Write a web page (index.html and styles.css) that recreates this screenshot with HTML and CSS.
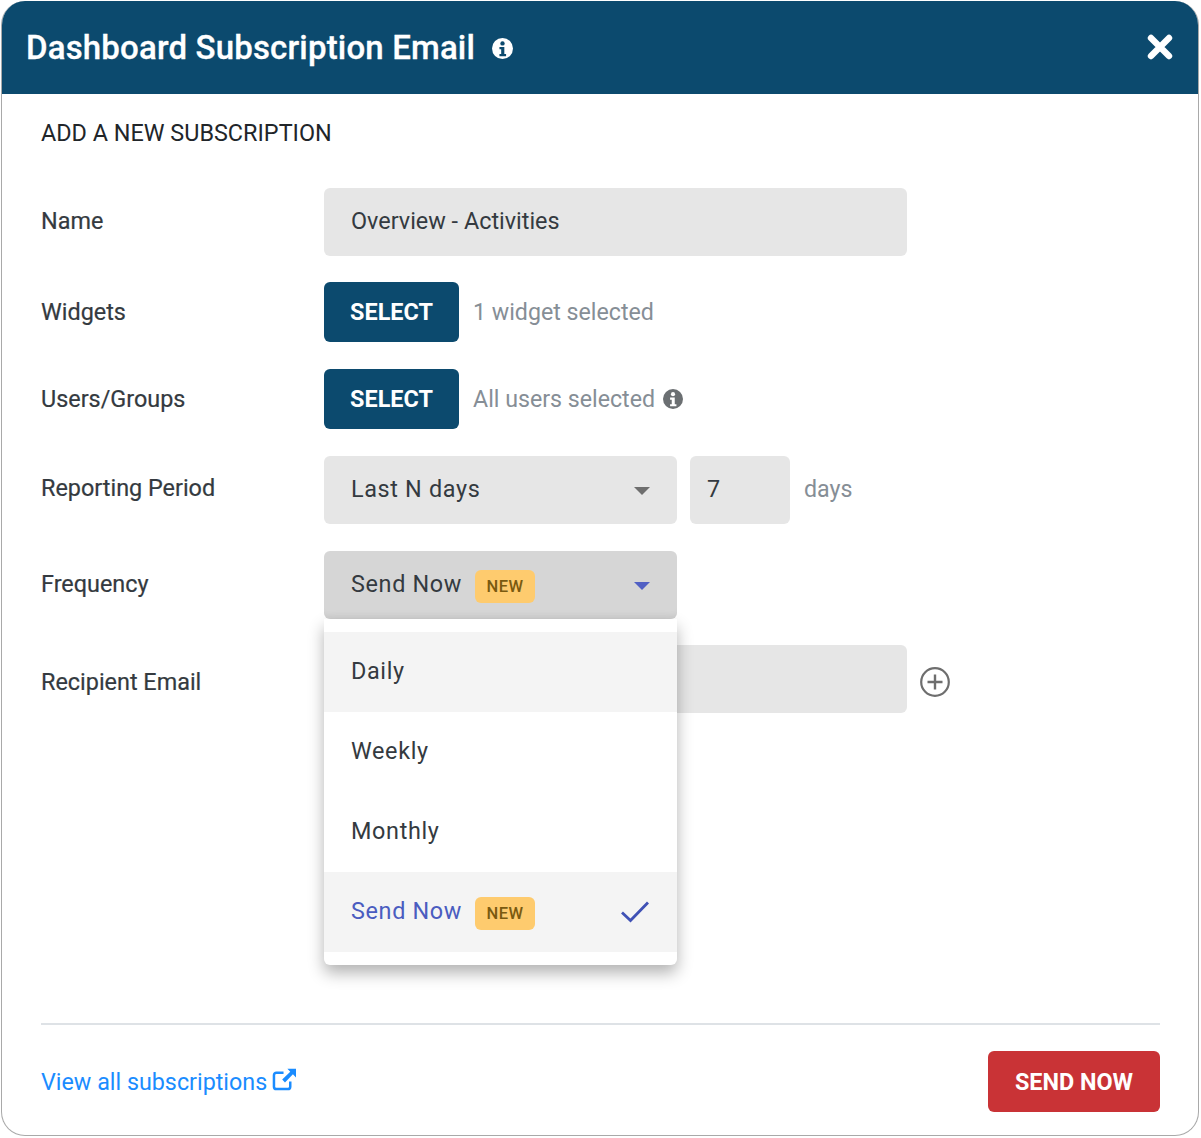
FILE: index.html
```html
<!DOCTYPE html>
<html lang="en">
<head>
<meta charset="utf-8">
<title>Dashboard Subscription Email</title>
<link rel="stylesheet" href="styles.css">
</head>
<body>
<main class="modal">
  <header class="modal-head">
    <h1 class="modal-title">Dashboard Subscription Email</h1>
    <svg class="title-info" viewBox="0 0 24 24" aria-hidden="true"><circle cx="12" cy="12" r="12" fill="#fff"/><circle cx="12" cy="6.2" r="2.5" fill="#0c4a6e"/><path d="M8.5 10.2h5.6v8h2v2.6H8.5v-2.6h2v-5.4h-2z" fill="#0c4a6e"/></svg>
    <svg class="close" viewBox="0 0 26 26" aria-hidden="true"><path d="M4 4l18 18M22 4L4 22" stroke="#fff" stroke-width="6.4" stroke-linecap="round"/></svg>
  </header>
  <section class="modal-body">
    <h2 class="section-title">ADD A NEW SUBSCRIPTION</h2>
    <div class="form">
      <div class="row">
        <span class="label label-up1">Name</span>
        <div class="field field-wide">Overview - Activities</div>
      </div>
      <div class="row row-btn">
        <span class="label">Widgets</span>
        <button class="btn btn-navy">SELECT</button>
        <span class="hint">1 widget selected</span>
      </div>
      <div class="row row-btn">
        <span class="label">Users/Groups</span>
        <button class="btn btn-navy">SELECT</button>
        <span class="hint">All users selected</span>
        <svg class="hint-info" viewBox="0 0 24 24" aria-hidden="true"><circle cx="12" cy="12" r="12" fill="#6b6f72"/><circle cx="12" cy="6.2" r="2.5" fill="#fff"/><path d="M8.5 10.2h5.6v8h2v2.6H8.5v-2.6h2v-5.4h-2z" fill="#fff"/></svg>
      </div>
      <div class="row">
        <span class="label label-up2">Reporting Period</span>
        <div class="field select"><span class="select-text">Last N days</span><i class="caret"></i></div>
        <div class="field number">7</div>
        <span class="hint">days</span>
      </div>
      <div class="row">
        <span class="label label-up1">Frequency</span>
        <div class="field select select-open"><span class="select-text">Send Now</span><span class="badge">NEW</span><i class="caret caret-blue"></i></div>
      </div>
      <div class="row">
        <span class="label label-down3">Recipient Email</span>
        <div class="field field-wide"></div>
        <svg class="add" viewBox="0 0 32 32" aria-hidden="true"><circle cx="16" cy="16" r="13.8" fill="none" stroke="#6e6e6e" stroke-width="2.2"/><path d="M16 8.5v15M8.5 16h15" stroke="#6e6e6e" stroke-width="2.4"/></svg>
      </div>
      <ul class="menu">
        <li class="menu-item menu-hover">Daily</li>
        <li class="menu-item">Weekly</li>
        <li class="menu-item">Monthly</li>
        <li class="menu-item menu-active">Send Now<span class="badge">NEW</span><svg class="check" viewBox="0 0 30 24" aria-hidden="true"><path d="M2 12.5l8.5 8L28 2.5" fill="none" stroke="#3f51b5" stroke-width="2.8"/></svg></li>
      </ul>
    </div>
    <footer class="modal-foot">
      <a class="link" href="#">View all subscriptions<svg class="ext" viewBox="0 0 26 24" aria-hidden="true"><path d="M19 14v5.500a2.500 2.500 0 0 1-2.500 2.500h-12A2.500 2.500 0 0 1 2 19.500v-12A2.500 2.500 0 0 1 4.500 5H12" fill="none" stroke="#1a8cff" stroke-width="2.600"/><path d="M16 0.800h9v9l-3.200-3.200-8.300 8.400-2.900-2.900 8.400-8.300z" fill="#1a8cff"/></svg></a>
      <button class="btn btn-red">SEND NOW</button>
    </footer>
  </section>
</main>
</body>
</html>
```

FILE: styles.css
```css
* { box-sizing: border-box; }
html, body { margin: 0; padding: 0; background: #fff; }
body { padding: 1px 2px 1px 1px; font-family: Roboto, "Liberation Sans", sans-serif; color: #212529; }
.modal {
  height: 1135px;
  border: 1px solid #a9a9a9;
  border-top: 0;
  border-radius: 24px;
  overflow: hidden;
  display: flex;
  flex-direction: column;
  background: #fff;
}
.modal-head {
  height: 93px;
  flex: none;
  background: #0c4a6e;
  display: flex;
  align-items: center;
  padding: 0 25px 0 24px;
  color: #fff;
}
.modal-title { margin: 0; font-size: 33px; font-weight: 500; letter-spacing: 0.170px; -webkit-text-stroke: 0.300px #fff; }
.title-info { width: 21px; height: 21px; margin-left: 17px; margin-top: 2px; }
.close { width: 26px; height: 26px; margin-left: auto; margin-bottom: 1px; }
.modal-body { flex: 1; display: flex; flex-direction: column; padding: 0 38px 0 39px; }
.section-title { margin: 0; height: 93.500px; padding-top: 24px; font-size: 23.400px; line-height: 30px; font-weight: 400; color: #212529; }
.form { position: relative; flex: 1; display: flex; flex-direction: column; gap: 26.800px; }
.row { display: flex; align-items: center; height: 68px; }
.row-btn { height: 60px; }
.label { width: 283px; flex: none; font-size: 23.400px; color: #343a40; -webkit-text-stroke: 0.200px #343a40; }
.label-up2 { padding-bottom: 4px; }
.label-up1 { padding-bottom: 2px; }
.label-down3 { padding-top: 6px; }
.field {
  height: 68px;
  background: #e6e6e6;
  border-radius: 6px;
  display: flex;
  align-items: center;
  padding: 0 0 2px 27px;
  font-size: 23.400px;
  color: #343a40;
}
.field-wide { width: 583px; }
.select { width: 353px; position: relative; letter-spacing: 0.650px; }
.select-open { background: #d6d6d6; box-shadow: inset 0 -8px 8px -8px rgba(0,0,0,.08); }
.number { width: 100px; margin-left: 13px; padding-left: 17px; margin-right: 14px; }
.caret {
  position: absolute;
  right: 27px;
  top: 31px;
  width: 0;
  height: 0;
  border-left: 8px solid transparent;
  border-right: 8px solid transparent;
  border-top: 8px solid #6e6e6e;
}
.caret-blue { border-top-color: #5160c4; }
.btn {
  border: 0;
  border-radius: 6px;
  color: #fff;
  font-family: inherit;
  font-weight: 700;
  font-size: 23.400px;
  height: 60px;
}
.btn-navy { width: 135px; background: #0c4a6e; flex: none; }
.btn-red { width: 172px; height: 61px; background: #c93336; }
.hint { margin-left: 14px; font-size: 23.200px; color: #868e96; }
.number + .hint { margin-left: 0; padding-bottom: 2px; }
.hint-info { width: 20px; height: 20px; margin-left: 8px; }
.badge {
  display: inline-flex;
  align-items: center;
  justify-content: center;
  width: 60px;
  height: 33px;
  margin-left: 13px;
  margin-top: 4px;
  border-radius: 6px;
  background: #fecb6e;
  color: #7a5a10;
  font-size: 16.500px;
  font-weight: 500;
  letter-spacing: 0.500px;
}
.select-open .badge { margin-top: 6px; }
.add { width: 32px; height: 32px; margin-left: 12px; margin-top: 6px; }
.menu {
  position: absolute;
  top: 431.500px;
  left: 283px;
  width: 353px;
  height: 346px;
  margin: 0;
  padding: 13px 0;
  list-style: none;
  background: #fff;
  border-radius: 0 0 6px 6px;
  box-shadow: 0 8px 16px rgba(0,0,0,.3);
}
.menu-item {
  height: 80px;
  display: flex;
  align-items: center;
  padding: 0 27px 2px;
  font-size: 23.400px;
  letter-spacing: 0.650px;
  color: #343a40;
  position: relative;
}
.menu-hover, .menu-active { background: #f4f4f4; }
.menu-active { color: #4a5cc0; }
.check { position: absolute; right: 27px; top: 28px; width: 30px; height: 24px; }
.modal-foot {
  flex: none;
  height: 112px;
  border-top: 2px solid #dee2e6;
  display: flex;
  align-items: flex-start;
  justify-content: space-between;
  padding-top: 26px;
}
.link { display: flex; align-items: center; height: 61px; color: #1a8cff; text-decoration: none; font-size: 23.300px; }
.ext { width: 25px; height: 23px; margin-left: 5px; margin-top: -4px; }
```
